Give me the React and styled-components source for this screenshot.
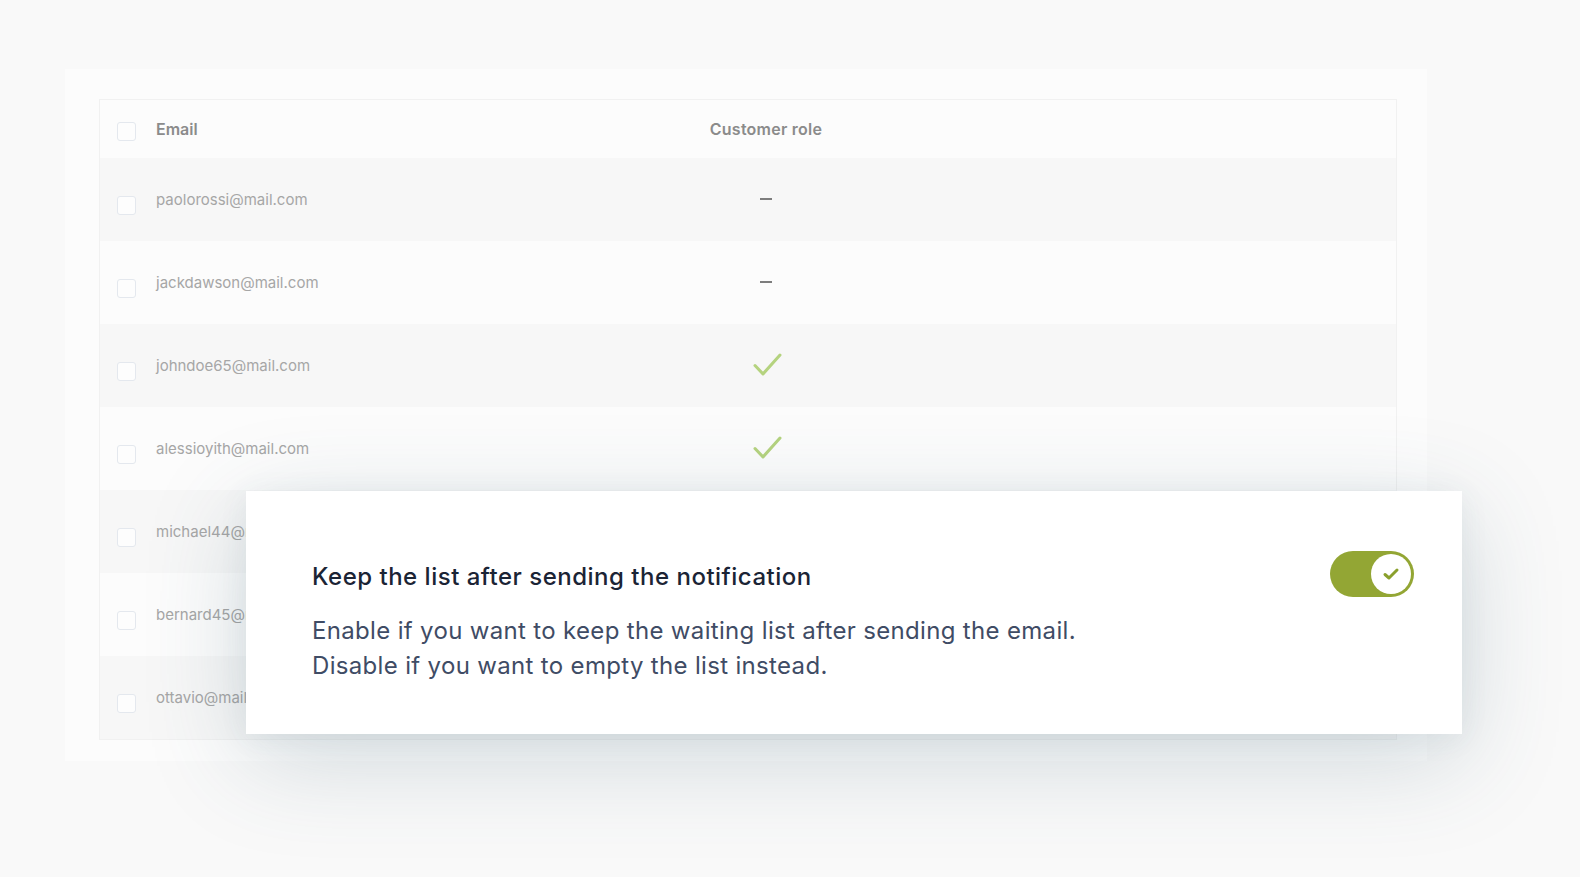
import React from "react";
import styled, { createGlobalStyle } from "styled-components";

const GlobalStyle = createGlobalStyle`
  html, body { margin: 0; padding: 0; }
  body {
    background: #f9f9f9;
    font-family: Inter, "Noto Sans", Arial, sans-serif;
    -webkit-font-smoothing: antialiased;
  }
`;

const Page = styled.div`
  width: 1580px;
  height: 877px;
  padding: 69px 0 0 65px;
  box-sizing: border-box;
  overflow: hidden;
`;

const Panel = styled.div`
  position: relative;
  width: 1362px;
  box-sizing: border-box;
  padding: 30px 30px 21px 34px;
  background: #fcfcfc;
`;

const Table = styled.div`
  width: 1298px;
  border: 1px solid #f1f1f1;
  box-sizing: border-box;
`;

const Row = styled.div`
  display: grid;
  grid-template-columns: 55px 511px 200px 1fr;
  align-items: center;
  height: ${(p) => (p.$header ? "58px" : "83px")};
  background: ${(p) => (p.$alt ? "#f7f7f7" : "#fcfcfc")};
`;

const CheckCell = styled.div`
  padding-left: 17px;
  padding-top: ${(p) => (p.$header ? "4px" : "12px")};
  display: flex;
`;

const Box = styled.span`
  width: 19px;
  height: 19px;
  box-sizing: border-box;
  border: 1.5px solid #e4e8ee;
  border-radius: 3px;
  background: #fdfdfd;
`;

const HeadText = styled.div`
  font-family: Inter, Arial, sans-serif;
  font-size: 16px;
  font-weight: 600;
  color: #8b8b8b;
  padding-left: ${(p) => (p.$center ? "0" : "1px")};
  letter-spacing: ${(p) => (p.$center ? "0.25px" : "0")};
  text-align: ${(p) => (p.$center ? "center" : "left")};
`;

const EmailText = styled.div`
  font-family: Inter, Arial, sans-serif;
  font-size: 15px;
  color: #a6a6a6;
  padding-left: 1px;
  white-space: nowrap;
`;

const RoleCell = styled.div`
  display: flex;
  justify-content: center;
  align-items: center;
`;

const Dash = styled.span`
  display: block;
  width: 12px;
  height: 2px;
  background: #7d7d7d;
  margin-top: -2px;
`;

const CheckIcon = styled.svg`
  display: block;
  margin-left: 4px;
`;

const Card = styled.div`
  position: absolute;
  left: 181px;
  top: 422px;
  width: 1216px;
  height: 243px;
  box-sizing: border-box;
  padding: 60px 48px 0 66px;
  background: #ffffff;
  box-shadow: 0 24px 100px rgba(60, 95, 115, 0.22), 0 4px 28px rgba(60, 95, 115, 0.07);
`;

const TitleRow = styled.div`
  display: flex;
  align-items: center;
  justify-content: space-between;
  height: 46px;
`;

const Title = styled.h2`
  margin: 0;
  padding-top: 4px;
  font-family: Inter, Arial, sans-serif;
  font-size: 24px;
  font-weight: 500;
  color: #1b2435;
  letter-spacing: 0.5px;
`;

const Desc = styled.p`
  margin: 16px 0 0;
  font-family: Inter, Arial, sans-serif;
  font-size: 24px;
  line-height: 35px;
  font-weight: 400;
  color: #3f4c65;
  letter-spacing: 0.33px;
`;

const Toggle = styled.div`
  width: 84px;
  height: 46px;
  border-radius: 23px;
  background: #93a634;
  display: flex;
  align-items: center;
  justify-content: flex-end;
  padding: 3px;
  box-sizing: border-box;
`;

const Knob = styled.div`
  width: 40px;
  height: 40px;
  border-radius: 50%;
  background: #fff;
  display: flex;
  align-items: center;
  justify-content: center;
`;

const RoleCheck = () => (
  <CheckIcon width="30" height="26" viewBox="0 0 30 26">
    <path d="M2 12.5 L10 21 L27 2" fill="none" stroke="#b5d37f" strokeWidth="3" strokeLinecap="round" strokeLinejoin="round" />
  </CheckIcon>
);

const KnobCheck = () => (
  <svg width="18" height="14" viewBox="0 0 18 14">
    <path d="M3 7.5 L7 11 L15 3" fill="none" stroke="#8aa02c" strokeWidth="3" strokeLinecap="round" strokeLinejoin="round" />
  </svg>
);

const rows = [
  { email: "paolorossi@mail.com", role: "dash" },
  { email: "jackdawson@mail.com", role: "dash" },
  { email: "johndoe65@mail.com", role: "check" },
  { email: "alessioyith@mail.com", role: "check" },
  { email: "michael44@mail.com", role: "check" },
  { email: "bernard45@mail.com", role: "dash" },
  { email: "ottavio@mail.com", role: "check" },
];

export default function App() {
  return (
    <>
      <GlobalStyle />
      <Page>
        <Panel>
          <Table>
            <Row $header>
              <CheckCell $header><Box /></CheckCell>
              <HeadText>Email</HeadText>
              <HeadText $center>Customer role</HeadText>
              <div />
            </Row>
            {rows.map((r, i) => (
              <Row key={r.email} $alt={i % 2 === 0}>
                <CheckCell><Box /></CheckCell>
                <EmailText>{r.email}</EmailText>
                <RoleCell>{r.role === "dash" ? <Dash /> : <RoleCheck />}</RoleCell>
                <div />
              </Row>
            ))}
          </Table>
          <Card>
            <TitleRow>
              <Title>Keep the list after sending the notification</Title>
              <Toggle>
                <Knob><KnobCheck /></Knob>
              </Toggle>
            </TitleRow>
            <Desc>
              Enable if you want to keep the waiting list after sending the email.
              <br />
              Disable if you want to empty the list instead.
            </Desc>
          </Card>
        </Panel>
      </Page>
    </>
  );
}
